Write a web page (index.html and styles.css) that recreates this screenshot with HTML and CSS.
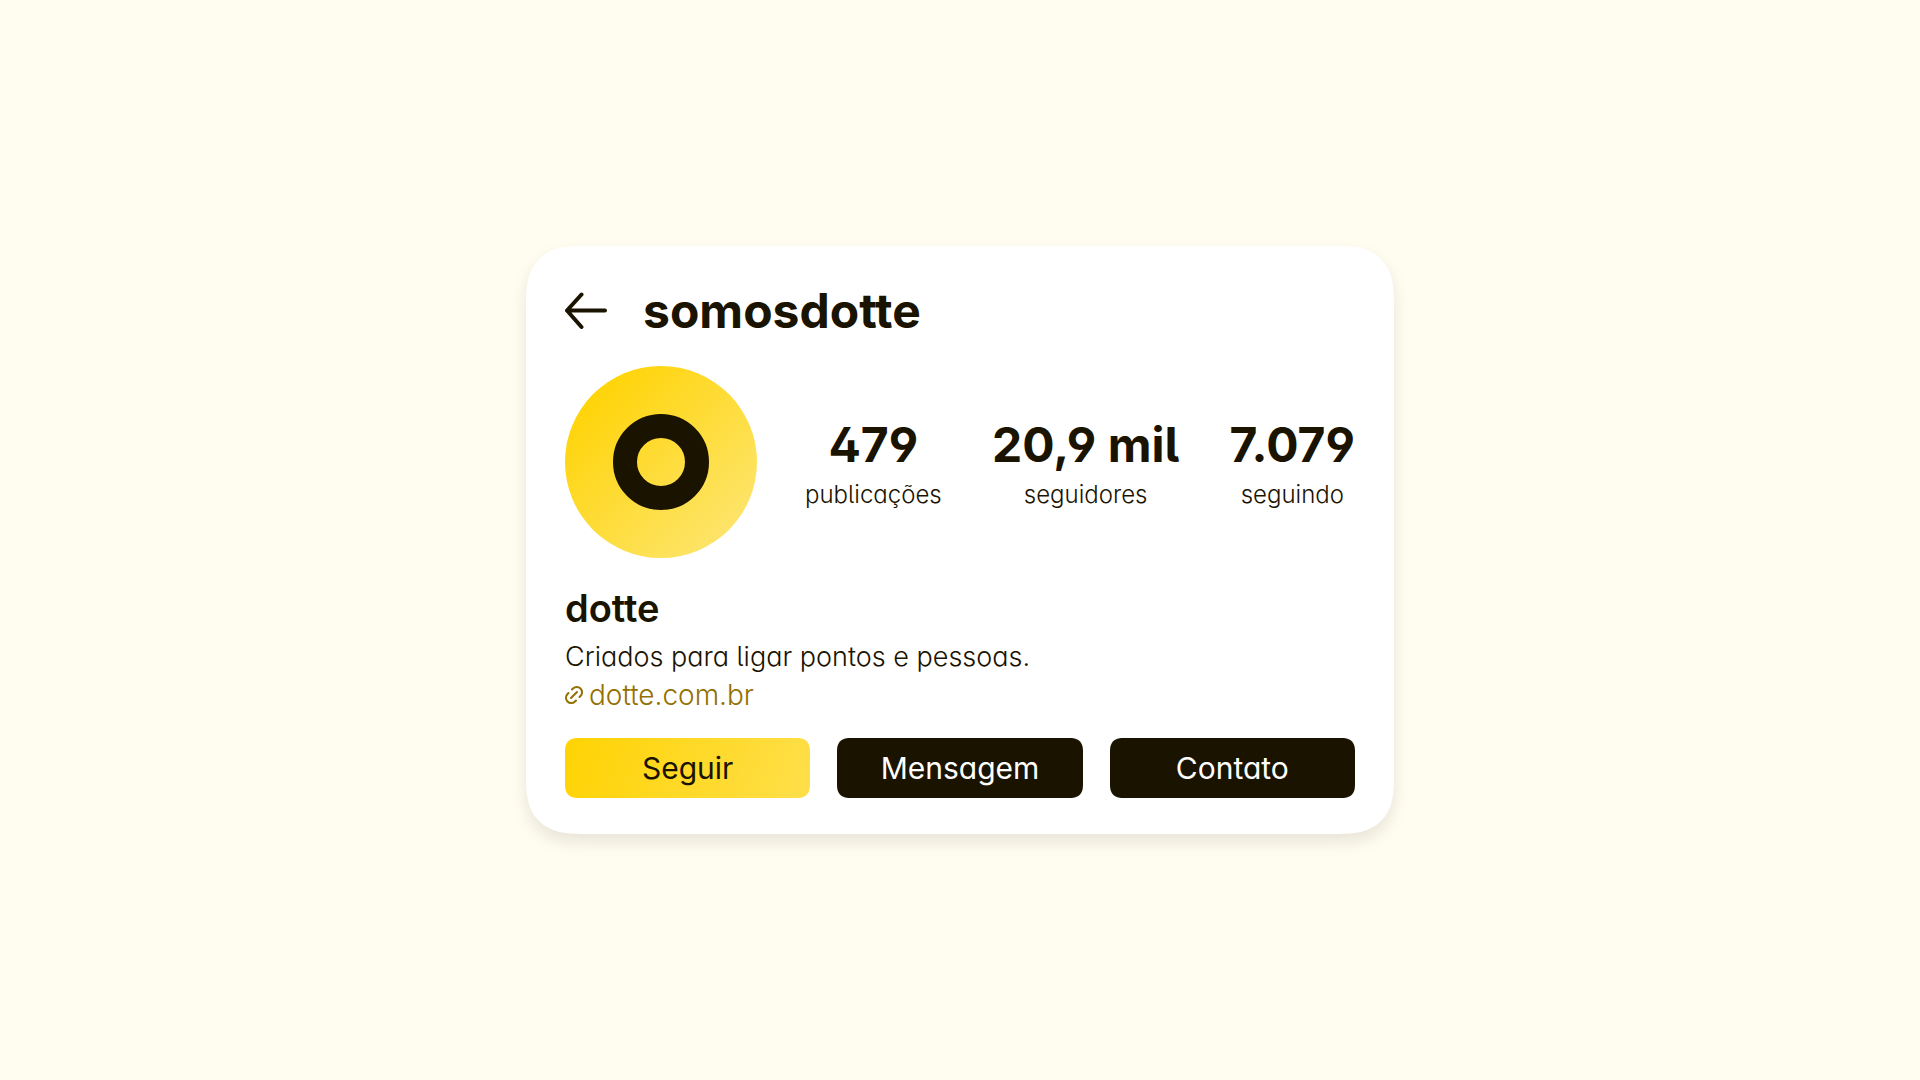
FILE: index.html
```html
<!DOCTYPE html>
<html lang="pt-BR">
<head>
<meta charset="utf-8">
<meta name="viewport" content="width=device-width, initial-scale=1">
<title>somosdotte</title>
<link rel="stylesheet" href="styles.css">
</head>
<body>
<main class="card">
  <header class="card-header">
    <button class="back" type="button" aria-label="Voltar">
      <svg viewBox="0 0 42 38" width="42" height="38" aria-hidden="true"><path d="M40 18.500H2M16.500 2.500L2 18.500l14.500 16.500"/></svg>
    </button>
    <h1 class="handle">somosdotte</h1>
  </header>
  <section class="profile">
    <svg class="avatar" viewBox="0 0 192 192" role="img" aria-label="dotte">
      <defs>
        <linearGradient id="sun" x1="0" y1="0" x2="1" y2="1">
          <stop offset="0.1" stop-color="#ffd303"/>
          <stop offset="0.9" stop-color="#fde56e"/>
        </linearGradient>
      </defs>
      <circle cx="96" cy="96" r="96" fill="url(#sun)"/>
      <circle cx="96" cy="96" r="36" fill="none" stroke="#1a1300" stroke-width="24"/>
    </svg>
    <dl class="stats">
      <div class="stat"><dt>publicações</dt><dd>479</dd></div>
      <div class="stat"><dt>seguidores</dt><dd>20,9 mil</dd></div>
      <div class="stat"><dt>seguindo</dt><dd>7.079</dd></div>
    </dl>
  </section>
  <section class="bio">
    <h2 class="name">dotte</h2>
    <p class="about">Criados para ligar pontos e pessoas.</p>
    <a class="site" href="https://dotte.com.br">
      <svg viewBox="3 2 20 20" width="20" height="20" aria-hidden="true"><path d="M9 15l6-6M10 6.500l1-1a5 5 0 0 1 7.500 7.500l-1 1M14 17.500l-1 1a5 5 0 0 1-7.500-7.500l1-1"/></svg>
      <span>dotte.com.br</span>
    </a>
  </section>
  <div class="actions">
    <button class="action primary" type="button">Seguir</button>
    <button class="action" type="button">Mensagem</button>
    <button class="action" type="button">Contato</button>
  </div>
</main>
</body>
</html>
```
FILE: styles.css
```css
* { box-sizing: border-box; margin: 0; }

body {
  min-height: 100vh;
  display: flex;
  align-items: center;
  justify-content: center;
  background: #fffdf0;
  color: #1a1300;
  font-family: Inter, "Liberation Sans", sans-serif;
  font-feature-settings: "cv11", "cv05", "ss01";
}

.card {
  width: 100%;
  max-width: 868px;
  padding: 36px 39px;
  border-radius: 56px;
  corner-shape: superellipse(1.4);
  background: #fff;
  box-shadow: 0 8px 16px rgba(26, 19, 0, 0.1);
}

.card-header { display: flex; align-items: center; gap: 36px; }

.back { display: flex; padding: 0; border: 0; background: none; cursor: pointer; }
.back path { fill: none; stroke: #1a1300; stroke-width: 4; stroke-linecap: round; stroke-linejoin: round; }

.handle { font-size: 48px; line-height: 58px; font-weight: 700; }

.profile { display: flex; align-items: center; gap: 48px; margin-top: 26px; }
.avatar { width: 192px; height: 192px; flex: none; }

.stats { flex: 1; display: flex; justify-content: space-between; padding-top: 4px; }
.stat { display: flex; flex-direction: column-reverse; text-align: center; }
.stat dd { font-size: 48px; line-height: 60px; font-weight: 700; }
.stat dt { padding-top: 2px; font-size: 24px; line-height: 36px; font-weight: 350; }

.bio { display: flex; flex-direction: column; align-items: flex-start; margin-top: 26px; }
.name { font-size: 38px; line-height: 48px; font-weight: 600; }
.about { margin-top: 6px; font-size: 27px; line-height: 38px; font-weight: 350; }
.site { display: flex; align-items: center; gap: 4px; color: #947000; font-size: 28px; line-height: 38px; font-weight: 350; text-decoration: none; }
.site path { fill: none; stroke: currentColor; stroke-width: 2; stroke-linecap: round; }
.site svg { overflow: visible; }

.actions { display: grid; grid-template-columns: repeat(3, 1fr); gap: 27px; margin-top: 24px; }
.action {
  height: 60px;
  border: 0;
  border-radius: 14px;
  corner-shape: superellipse(1.4);
  background: #1a1300;
  color: #fff;
  font: inherit;
  font-feature-settings: inherit;
  font-size: 30px;
  cursor: pointer;
}
.primary { background: linear-gradient(110deg, #ffd303, #fedf4a); color: #1a1300; }
```
